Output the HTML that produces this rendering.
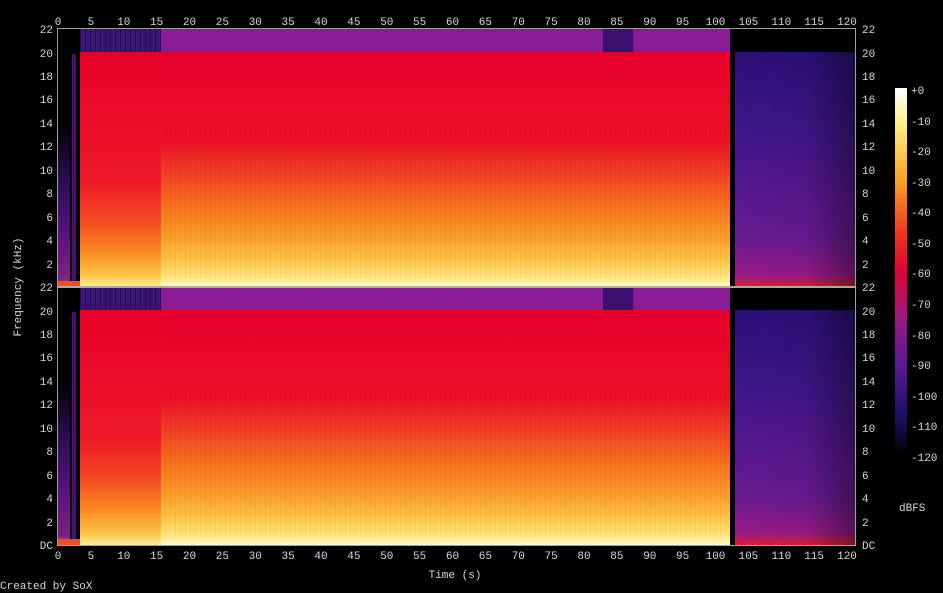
<!DOCTYPE html>
<html><head><meta charset="utf-8"><style>
html,body{margin:0;padding:0;background:#000;}
svg{display:block}
text{font-family:"Liberation Mono","DejaVu Sans Mono",monospace;font-size:11px;fill:#d8d8d8}
</style></head><body>
<svg width="943" height="593" viewBox="0 0 943 593" xmlns="http://www.w3.org/2000/svg">
<defs>
<linearGradient id="main" x1="0" y1="0" x2="0" y2="1">
<stop offset="0" stop-color="#e6002c"/>
<stop offset="0.38" stop-color="#ec1228"/>
<stop offset="0.5" stop-color="#f23a26"/>
<stop offset="0.65" stop-color="#f7701c"/>
<stop offset="0.78" stop-color="#fb9a28"/>
<stop offset="0.88" stop-color="#fdc444"/>
<stop offset="0.96" stop-color="#ffe680"/>
<stop offset="1" stop-color="#fffad0"/>
</linearGradient>
<linearGradient id="early" x1="0" y1="0" x2="0" y2="1">
<stop offset="0" stop-color="#e8002a"/>
<stop offset="0.55" stop-color="#ee1a28"/>
<stop offset="0.72" stop-color="#f44a22"/>
<stop offset="0.85" stop-color="#f98a20"/>
<stop offset="0.95" stop-color="#fdc448"/>
<stop offset="1" stop-color="#fff0a0"/>
</linearGradient>
<linearGradient id="tail" x1="0" y1="0" x2="0" y2="1">
<stop offset="0" stop-color="#2a1078"/>
<stop offset="0.4" stop-color="#44168a"/>
<stop offset="0.8" stop-color="#6a1a92"/>
<stop offset="0.95" stop-color="#9a1a88"/>
<stop offset="1" stop-color="#e0202a"/>
</linearGradient>
<linearGradient id="tailh" x1="0" y1="0" x2="1" y2="0">
<stop offset="0" stop-color="#000" stop-opacity="0"/>
<stop offset="0.6" stop-color="#000" stop-opacity="0.05"/>
<stop offset="1" stop-color="#000" stop-opacity="0.4"/>
</linearGradient>
<linearGradient id="lead" x1="0" y1="0" x2="0" y2="1">
<stop offset="0" stop-color="#000"/>
<stop offset="0.35" stop-color="#2a0c50"/>
<stop offset="0.7" stop-color="#5a1480"/>
<stop offset="0.95" stop-color="#802080"/>
<stop offset="1" stop-color="#f0602a"/>
</linearGradient>
<linearGradient id="cbar" x1="0" y1="0" x2="0" y2="1">
<stop offset="0" stop-color="#ffffff"/>
<stop offset="0.1" stop-color="#fff080"/>
<stop offset="0.25" stop-color="#fca020"/>
<stop offset="0.4" stop-color="#f23020"/>
<stop offset="0.5" stop-color="#e0003a"/>
<stop offset="0.62" stop-color="#a01880"/>
<stop offset="0.75" stop-color="#5a1898"/>
<stop offset="0.88" stop-color="#20106a"/>
<stop offset="1" stop-color="#000000"/>
</linearGradient>
<pattern id="stripes" width="5" height="10" patternUnits="userSpaceOnUse">
<rect width="1" height="10" fill="#000" opacity="0.35"/>
</pattern>
<g id="chan">
<rect x="58" y="0" width="797" height="258" fill="#000"/>
<rect x="58" y="90" width="12" height="168" fill="url(#lead)"/>
<rect x="72" y="25" width="4" height="233" fill="#4a1070"/>
<rect x="80" y="0" width="81" height="23" fill="#3a1478"/>
<rect x="80" y="0" width="81" height="23" fill="url(#stripes)"/>
<rect x="80" y="23" width="81" height="235" fill="url(#early)"/>
<rect x="161" y="0" width="569" height="23" fill="#8a1c98"/>
<rect x="161" y="23" width="569" height="235" fill="url(#main)"/>
<rect x="161" y="100" width="569" height="150" fill="url(#stripes)" opacity="0.15"/>
<rect x="603" y="0" width="30" height="23" fill="#3a1070"/>
<rect x="730" y="0" width="125" height="258" fill="#000"/>
<rect x="735" y="23" width="120" height="235" fill="url(#tail)"/>
<rect x="735" y="23" width="120" height="235" fill="url(#tailh)"/>
<rect x="58" y="252" width="22" height="6" fill="#f05020"/>
</g>
</defs>
<use href="#chan" x="0" y="29"/>
<use href="#chan" x="0" y="287"/>
<rect x="58" y="286" width="797" height="2" fill="#aaa"/>
<rect x="57.5" y="28.5" width="798" height="517" fill="none" stroke="#a0a0a0" stroke-width="1"/>
<g text-anchor="middle">
<text x="58" y="25">0</text><text x="90.9" y="25">5</text><text x="123.8" y="25">10</text><text x="156.6" y="25">15</text><text x="189.5" y="25">20</text><text x="222.4" y="25">25</text><text x="255.3" y="25">30</text><text x="288.1" y="25">35</text><text x="321" y="25">40</text><text x="353.9" y="25">45</text><text x="386.8" y="25">50</text><text x="419.6" y="25">55</text><text x="452.5" y="25">60</text><text x="485.4" y="25">65</text><text x="518.3" y="25">70</text><text x="551.1" y="25">75</text><text x="584" y="25">80</text><text x="616.9" y="25">85</text><text x="649.8" y="25">90</text><text x="682.6" y="25">95</text><text x="715.5" y="25">100</text><text x="748.4" y="25">105</text><text x="781.3" y="25">110</text><text x="814.1" y="25">115</text><text x="847" y="25">120</text>
<text x="58" y="559">0</text><text x="90.9" y="559">5</text><text x="123.8" y="559">10</text><text x="156.6" y="559">15</text><text x="189.5" y="559">20</text><text x="222.4" y="559">25</text><text x="255.3" y="559">30</text><text x="288.1" y="559">35</text><text x="321" y="559">40</text><text x="353.9" y="559">45</text><text x="386.8" y="559">50</text><text x="419.6" y="559">55</text><text x="452.5" y="559">60</text><text x="485.4" y="559">65</text><text x="518.3" y="559">70</text><text x="551.1" y="559">75</text><text x="584" y="559">80</text><text x="616.9" y="559">85</text><text x="649.8" y="559">90</text><text x="682.6" y="559">95</text><text x="715.5" y="559">100</text><text x="748.4" y="559">105</text><text x="781.3" y="559">110</text><text x="814.1" y="559">115</text><text x="847" y="559">120</text>
<text x="455" y="578">Time (s)</text>
</g>
<g text-anchor="end">
<text x="53" y="33">22</text><text x="53" y="57">20</text><text x="53" y="80">18</text><text x="53" y="103">16</text><text x="53" y="127">14</text><text x="53" y="150">12</text><text x="53" y="174">10</text><text x="53" y="197">8</text><text x="53" y="221">6</text><text x="53" y="244">4</text><text x="53" y="268">2</text>
<text x="53" y="291">22</text><text x="53" y="315">20</text><text x="53" y="338">18</text><text x="53" y="361">16</text><text x="53" y="385">14</text><text x="53" y="408">12</text><text x="53" y="432">10</text><text x="53" y="455">8</text><text x="53" y="479">6</text><text x="53" y="502">4</text><text x="53" y="526">2</text><text x="53" y="549">DC</text>
</g>
<g text-anchor="start">
<text x="862" y="33">22</text><text x="862" y="57">20</text><text x="862" y="80">18</text><text x="862" y="103">16</text><text x="862" y="127">14</text><text x="862" y="150">12</text><text x="862" y="174">10</text><text x="862" y="197">8</text><text x="862" y="221">6</text><text x="862" y="244">4</text><text x="862" y="268">2</text>
<text x="862" y="291">22</text><text x="862" y="315">20</text><text x="862" y="338">18</text><text x="862" y="361">16</text><text x="862" y="385">14</text><text x="862" y="408">12</text><text x="862" y="432">10</text><text x="862" y="455">8</text><text x="862" y="479">6</text><text x="862" y="502">4</text><text x="862" y="526">2</text><text x="862" y="549">DC</text>
</g>
<text x="21" y="287" text-anchor="middle" transform="rotate(-90 21 287)">Frequency (kHz)</text>
<rect x="895" y="88" width="12" height="368" fill="url(#cbar)"/>
<g text-anchor="start">
<text x="911" y="94">+0</text><text x="911" y="125">-10</text><text x="911" y="155">-20</text><text x="911" y="186">-30</text><text x="911" y="216">-40</text><text x="911" y="247">-50</text><text x="911" y="277">-60</text><text x="911" y="308">-70</text><text x="911" y="339">-80</text><text x="911" y="369">-90</text><text x="911" y="400">-100</text><text x="911" y="430">-110</text><text x="911" y="461">-120</text>
</g>
<text x="899" y="511">dBFS</text>
<text x="0" y="589">Created by SoX</text>
</svg>
</body></html>
